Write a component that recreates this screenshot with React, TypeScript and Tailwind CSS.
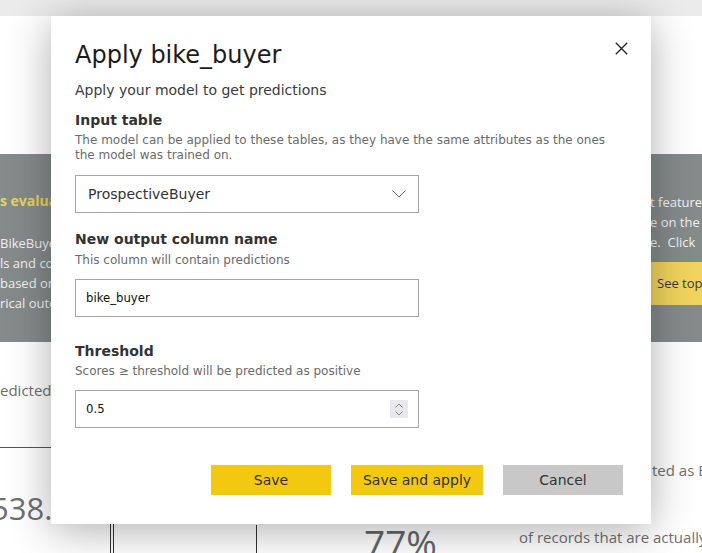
import React from 'react'

export default function App() {
  return (
    <div className="relative w-[702px] h-[553px] overflow-hidden bg-white font-['Open_Sans',sans-serif]">
      {/* page behind the dialog */}
      <div className="h-[16px] bg-[#ebebeb]" />
      <div className="h-[138px]" />
      <div className="h-[188px] bg-[#858a8b] flex justify-between overflow-hidden">
        <div className="w-[200px] shrink-0 pt-[37px] text-[13px] leading-[20px] text-[#f2f2f2]">
          <div className="font-bold text-[14px] text-[#edd35a] whitespace-nowrap">s evaluation</div>
          <div className="mt-[22px] whitespace-nowrap">BikeBuyer model</div>
          <div className="whitespace-nowrap">ls and compare</div>
          <div className="whitespace-nowrap">based on the</div>
          <div className="whitespace-nowrap">rical outcomes</div>
        </div>
        <div className="w-[52px] shrink-0 pt-[38px] text-[13px] leading-[20px] text-[#f2f2f2]">
          <div className="whitespace-nowrap">t features</div>
          <div className="whitespace-nowrap">e on the</div>
          <div className="whitespace-nowrap">e.&nbsp; Click</div>
          <div className="mt-[10px] -ml-[10px] h-[43px] bg-[#f0d45e] pl-[17px] pt-[11px] text-[#3a3a3a] whitespace-nowrap">See top</div>
        </div>
      </div>
      <div className="flex">
        <div className="w-[51px] shrink-0 pt-[37px] text-[#707070]">
          <div className="text-[15px] leading-[22px] whitespace-nowrap">edicted</div>
          <div className="mt-[46px] h-px bg-[#555]" />
          <div className="mt-[40px] -ml-[9px] text-[31px] leading-[40px] whitespace-nowrap">538.</div>
        </div>
        <div className="w-[59px] shrink-0" />
        <div className="flex shrink-0 pt-[182px]">
          <div className="w-px h-[40px] bg-[#333]" />
          <div className="w-[2px]" />
          <div className="w-px h-[40px] bg-[#333]" />
        </div>
        <div className="w-[142px] shrink-0" />
        <div className="shrink-0 pt-[183px]">
          <div className="w-px h-[40px] bg-[#333]" />
        </div>
        <div className="w-[107px] shrink-0" />
        <div className="w-[155px] shrink-0 pt-[182px] text-[37px] leading-[37px] text-[#5f6869] whitespace-nowrap">77%</div>
        <div className="shrink-0 pt-[117px] text-[15px] leading-[22px] text-[#707070] whitespace-nowrap">
          <div className="pl-[133px]">ted as BikeBuyer</div>
          <div className="mt-[45px]">of records that are actually</div>
        </div>
      </div>

      {/* dialog */}
      <div className="absolute left-[51px] top-[16px] w-[600px] h-[508px] bg-white shadow-[0_6px_40px_rgba(0,0,0,0.32)] pl-[24px] pt-[23px] font-['DejaVu_Sans',sans-serif]">
        <button className="absolute right-[23px] top-[25px] w-[14px] h-[14px] flex items-center justify-center">
          <svg width="13" height="13" viewBox="0 0 13 13" fill="none" stroke="#222" strokeWidth="1.3">
            <path d="M0.8 0.8 L12.2 12.2 M12.2 0.8 L0.8 12.2" />
          </svg>
        </button>
        <h1 className="text-[24px] leading-[32px] text-[#1b1b1b]">Apply bike_buyer</h1>
        <p className="mt-[9px] text-[14px] leading-[20px] text-[#3b3b3b]">Apply your model to get predictions</p>

        <div className="mt-[10px] text-[14px] leading-[20px] font-bold text-[#333]">Input table</div>
        <p className="mt-[3px] w-[540px] text-[12px] leading-[15px] text-[#6b6b6b]">
          The model can be applied to these tables, as they have the same attributes as the ones the model was trained on.
        </p>
        <div className="mt-[12px] w-[344px] h-[38px] border border-[#a6a6a6] flex items-center justify-between pl-[12px] pr-[12px]">
          <span className="text-[14px] text-[#333]">ProspectiveBuyer</span>
          <svg width="14" height="8" viewBox="0 0 14 8" fill="none" stroke="#707070" strokeWidth="1">
            <path d="M0.5 0.5 L7 7 L13.5 0.5" />
          </svg>
        </div>

        <div className="mt-[16px] text-[14px] leading-[20px] font-bold text-[#333]">New output column name</div>
        <p className="mt-[4px] text-[12px] leading-[15px] text-[#6b6b6b]">This column will contain predictions</p>
        <div className="mt-[11px] w-[344px] h-[38px] border border-[#a6a6a6] flex items-center pl-[10px]">
          <span className="text-[13px] text-[#111] font-['DejaVu_Sans_Condensed','DejaVu_Sans',sans-serif] [font-stretch:condensed]">bike_buyer</span>
        </div>

        <div className="mt-[24px] text-[14px] leading-[20px] font-bold text-[#333]">Threshold</div>
        <p className="mt-[3px] text-[12px] leading-[15px] text-[#6b6b6b]">Scores ≥ threshold will be predicted as positive</p>
        <div className="mt-[11px] w-[344px] h-[38px] border border-[#a6a6a6] flex items-center justify-between pl-[10px] pr-[10px]">
          <span className="text-[13px] text-[#111] font-['DejaVu_Sans_Condensed','DejaVu_Sans',sans-serif] [font-stretch:condensed]">0.5</span>
          <div className="w-[18px] h-[18px] bg-[#e8e8ee] flex flex-col items-center justify-center gap-[3px]">
            <svg width="8" height="5" viewBox="0 0 8 5" fill="none" stroke="#8a8a8a" strokeWidth="1">
              <path d="M0.5 4.5 L4 1 L7.5 4.5" />
            </svg>
            <svg width="8" height="5" viewBox="0 0 8 5" fill="none" stroke="#8a8a8a" strokeWidth="1">
              <path d="M0.5 0.5 L4 4 L7.5 0.5" />
            </svg>
          </div>
        </div>

        <div className="mt-[37px] pr-[28px] flex justify-end gap-[20px] text-[14px] text-[#333]">
          <button className="w-[120px] h-[30px] bg-[#f2c811]">Save</button>
          <button className="w-[132px] h-[30px] bg-[#f2c811]">Save and apply</button>
          <button className="w-[120px] h-[30px] bg-[#c8c8c8]">Cancel</button>
        </div>
      </div>
    </div>
  )
}
